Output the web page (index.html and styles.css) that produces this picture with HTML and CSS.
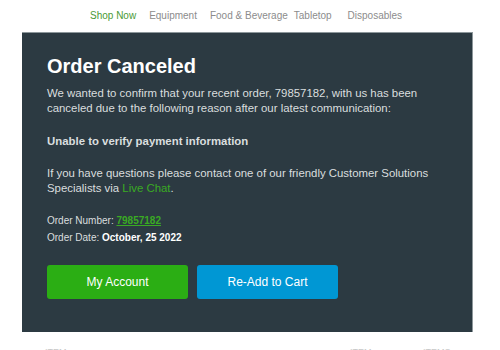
FILE: index.html
```html
<!DOCTYPE html>
<html>
<head>
<meta charset="utf-8">
<link rel="stylesheet" href="styles.css">
</head>
<body>
<nav class="topnav">
  <a class="nav-item active">Shop Now</a>
  <a class="nav-item">Equipment</a>
  <a class="nav-item">Food &amp; Beverage</a>
  <a class="nav-item">Tabletop</a>
  <a class="nav-item">Disposables</a>
</nav>
<main class="panel">
  <h1 class="title">Order Canceled</h1>
  <p class="text">We wanted to confirm that your recent order, 79857182, with us has been canceled due to the following reason after our latest communication:</p>
  <p class="reason">Unable to verify payment information</p>
  <p class="text">If you have questions please contact one of our friendly Customer Solutions Specialists via <a class="chat">Live Chat</a>.</p>
  <div class="meta">
    <div class="meta-row">Order Number: <a class="order-link">79857182</a></div>
    <div class="meta-row">Order Date: <b class="date">October, 25 2022</b></div>
  </div>
  <div class="actions">
    <a class="btn btn-green">My Account</a>
    <a class="btn btn-blue">Re-Add to Cart</a>
  </div>
</main>
<div class="footer">
  <span class="f-item f1">ITEM</span>
  <span class="f-item f2">ITEM</span>
  <span class="f-item f3">ITEMS</span>
</div>
</body>
</html>
```
FILE: styles.css
```css
* { box-sizing: border-box; }
html, body { margin: 0; padding: 0; background: #fff; }
body {
  font-family: "Liberation Sans", Arial, sans-serif;
  width: 500px;
  height: 350px;
  overflow: hidden;
}
.topnav {
  display: flex;
  padding-left: 90px;
  height: 32px;
  padding-top: 10px;
  font-size: 10px;
  line-height: 12px;
}
.nav-item { color: #8c8c8c; margin-right: 13px; }
.nav-item:nth-child(2) { margin-right: 13px; }
.nav-item:nth-child(3) { margin-right: 6px; }
.nav-item:nth-child(4) { margin-right: 16px; }
.nav-item.active { color: #4a9a35; }

.panel {
  margin-left: 22px;
  width: 451px;
  height: 300px;
  background: #2c3a42;
  border-top: 1px solid #8d979b;
  border-right: 1px solid #8d979b;
  padding: 21px 25px 0 25px;
  color: #dadedf;
}
.title {
  margin: 0;
  font-size: 20px;
  line-height: 24px;
  font-weight: bold;
  color: #fff;
}
.text {
  margin: 8px 0 0;
  font-size: 11.4px;
  line-height: 15px;
}
.reason {
  margin: 18px 0 0;
  font-size: 11.4px;
  line-height: 15px;
  font-weight: bold;
}
.reason + .text { margin-top: 17px; }
.chat { color: #3aaa23; }
.meta {
  margin-top: 16px;
  font-size: 10px;
  line-height: 17px;
}
.order-link { color: #3aaa23; font-weight: bold; text-decoration: underline; }
.date { color: #fff; }
.actions {
  display: flex;
  gap: 9px;
  margin-top: 19px;
}
.btn {
  width: 141px;
  height: 34px;
  border-radius: 3px;
  color: #fff;
  font-size: 12px;
  display: flex;
  align-items: center;
  justify-content: center;
}
.btn-green { background: #2bae14; }
.btn-blue { background: #0097d4; }
.footer {
  position: relative;
  height: 20px;
  font-size: 9px;
  color: #c8c8c8;
}
.f-item { position: absolute; top: 15px; }
.f1 { left: 45px; }
.f2 { left: 350px; }
.f3 { left: 423px; }
```
